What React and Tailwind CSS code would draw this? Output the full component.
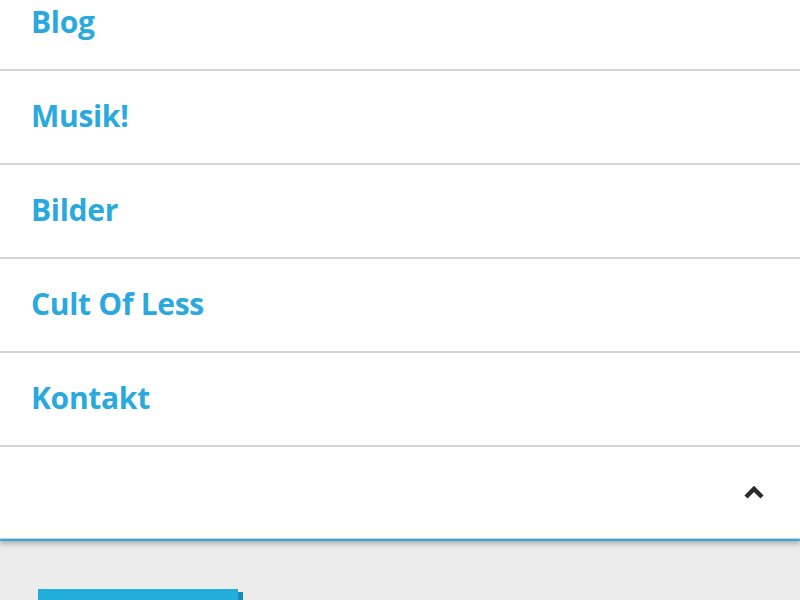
import React from 'react';

const links = ['Blog', 'Musik!', 'Bilder', 'Cult Of Less', 'Kontakt'];

export default function App() {
  return (
    <div className="w-[800px] h-[600px] overflow-hidden bg-[#ececec]" style={{ fontFamily: '"Open Sans", "Liberation Sans", sans-serif' }}>
      {/* Menu panel */}
      <nav className="-mt-[23px] bg-white shadow-[0_3px_5px_rgba(0,0,0,0.25)]">
        <ul>
          {links.map((label) => (
            <li key={label} className="border-b-2 border-[#d4d4d4]">
              <a href="#" className="flex h-[92px] items-center pl-[31px] pb-[4px] text-[30px] font-bold text-[#2aa9dc] tracking-[-0.3px]">
                {label}
              </a>
            </li>
          ))}
        </ul>
        <div className="flex h-[92px] items-center justify-end pr-[36px] border-b border-[#d0d0d0]">
          <svg width="20" height="14" viewBox="0 0 20 14" className="mt-[-2px]">
            <path d="M2 12 L10 4 L18 12" fill="none" stroke="#2b2b2b" strokeWidth="4.5" />
          </svg>
        </div>
        <div className="h-[2px] bg-[#2aa9dc]" />
      </nav>

      {/* Footer area */}
      <div className="pt-[48px] pl-[38px]">
        <div className="relative w-[205px] h-[20px]">
          <div className="w-[200px] h-full bg-[#23addb]" />
          <div className="absolute right-0 top-[3px] w-[5px] h-full bg-[#1a8bb5]" />
        </div>
      </div>
    </div>
  );
}
